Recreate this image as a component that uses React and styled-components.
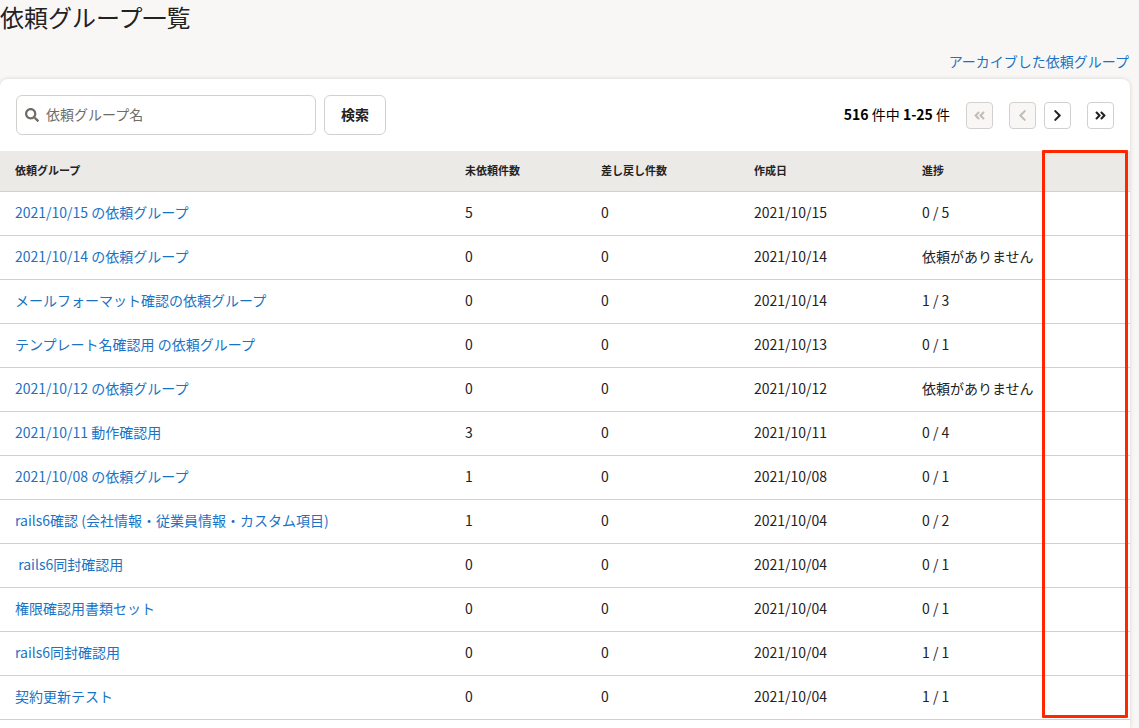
import React from 'react';
import styled, { createGlobalStyle, css } from 'styled-components';
import {
  FaAngleDoubleLeft,
  FaAngleDoubleRight,
  FaChevronLeft,
  FaChevronRight,
  FaSearch,
} from 'react-icons/fa';

const color = {
  text: '#23221f',
  link: '#1a73c4',
  muted: '#706d65',
  disabled: '#c1bdb7',
  border: '#d2d1ce',
  page: '#f8f7f6',
  head: '#ebeae7',
  mark: '#ff2600',
};

const GlobalStyle = createGlobalStyle`
  *, *::before, *::after { box-sizing: border-box; }
  body {
    margin: 0;
    background: ${color.page};
    color: ${color.text};
    font-family: "Noto Sans CJK JP", sans-serif;
    font-size: 14px;
    line-height: 20px;
  }
  button, input { font: inherit; color: inherit; }
`;

const Page = styled.main`
  display: flex;
  flex-direction: column;
  min-height: 100vh;
  padding-right: 9px;
`;

const Title = styled.h1`
  margin: 0;
  font-size: 24px;
  font-weight: 400;
  line-height: 34px;
`;

const Actions = styled.div`
  display: flex;
  justify-content: flex-end;
  padding: 17px 1px 8px 0;
`;

const TextLink = styled.a`
  color: ${color.link};
  text-decoration: none;
  &:hover { text-decoration: underline; }
`;

const Card = styled.section`
  flex: 1;
  background: #fff;
  border-radius: 8px 8px 0 0;
  box-shadow: 0 0 4px rgba(3, 3, 2, 0.15);
`;

const Toolbar = styled.div`
  display: flex;
  align-items: center;
  justify-content: space-between;
  padding: 16px;
`;

const SearchForm = styled.form`
  display: flex;
  gap: 8px;
`;

const SearchField = styled.label`
  display: flex;
  align-items: center;
  gap: 7px;
  width: 300px;
  height: 40px;
  padding: 0 8px;
  border: 1px solid ${color.border};
  border-radius: 6px;
  background: #fff;
  color: ${color.muted};
  svg { flex: none; }
`;

const SearchInput = styled.input`
  flex: 1;
  min-width: 0;
  padding: 0 0 2px;
  border: 0;
  outline: 0;
  background: transparent;
  color: ${color.text};
  &::placeholder { color: ${color.muted}; opacity: 1; }
`;

const SearchButton = styled.button`
  height: 40px;
  padding: 0 16px 2px;
  border: 1px solid ${color.border};
  border-radius: 6px;
  background: #fff;
  font-weight: 700;
`;

const Pagination = styled.nav`
  display: flex;
  align-items: center;
  gap: 16px;
`;

const Count = styled.p`
  margin: 0;
  padding-bottom: 2px;
  color: #000;
`;

const StepButtons = styled.div`
  display: flex;
  gap: 8px;
`;

const PageButton = styled.button`
  display: flex;
  align-items: center;
  justify-content: center;
  width: 27px;
  height: 27px;
  padding: 0;
  border: 1px solid ${color.border};
  border-radius: 4px;
  background: #fff;
  ${(p) =>
    p.disabled &&
    css`
      background: ${color.page};
      color: ${color.disabled};
    `}
`;

const TableArea = styled.div`
  position: relative;
`;

const Table = styled.table`
  width: 100%;
  table-layout: fixed;
  border-collapse: separate;
  border-spacing: 0;
`;

const Column = styled.col`
  width: ${(p) => (p.$width ? `${p.$width}px` : 'auto')};
`;

const HeadCell = styled.th`
  height: 41px;
  padding: 0 15px 2px;
  border-bottom: 1px solid ${color.border};
  background: ${color.head};
  font-size: 11px;
  font-weight: 700;
  text-align: left;
`;

const Cell = styled.td`
  height: 44px;
  padding: 0 0 4px 15px;
  border-bottom: 1px solid ${color.border};
  white-space: nowrap;
`;

const Highlight = styled.div`
  position: absolute;
  top: -1px;
  right: 2px;
  bottom: 2px;
  width: 86px;
  border: 3px solid ${color.mark};
  border-radius: 1px;
  pointer-events: none;
`;

const columns = [
  { label: '依頼グループ' },
  { label: '未依頼件数', width: 136 },
  { label: '差し戻し件数', width: 153 },
  { label: '作成日', width: 168 },
  { label: '進捗', width: 143 },
  { label: '', width: 80 },
];

const rows = [
  ['2021/10/15 の依頼グループ', 5, 0, '2021/10/15', '0 / 5'],
  ['2021/10/14 の依頼グループ', 0, 0, '2021/10/14', '依頼がありません'],
  ['メールフォーマット確認の依頼グループ', 0, 0, '2021/10/14', '1 / 3'],
  ['テンプレート名確認用 の依頼グループ', 0, 0, '2021/10/13', '0 / 1'],
  ['2021/10/12 の依頼グループ', 0, 0, '2021/10/12', '依頼がありません'],
  ['2021/10/11 動作確認用', 3, 0, '2021/10/11', '0 / 4'],
  ['2021/10/08 の依頼グループ', 1, 0, '2021/10/08', '0 / 1'],
  ['rails6確認 (会社情報・従業員情報・カスタム項目)', 1, 0, '2021/10/04', '0 / 2'],
  ['\u00a0rails6同封確認用', 0, 0, '2021/10/04', '0 / 1'],
  ['権限確認用書類セット', 0, 0, '2021/10/04', '0 / 1'],
  ['rails6同封確認用', 0, 0, '2021/10/04', '1 / 1'],
  ['契約更新テスト', 0, 0, '2021/10/04', '1 / 1'],
];

export default function App() {
  return (
    <>
      <GlobalStyle />
      <Page lang="ja">
        <Title>依頼グループ一覧</Title>
        <Actions>
          <TextLink href="#archive">アーカイブした依頼グループ</TextLink>
        </Actions>
        <Card>
          <Toolbar>
            <SearchForm role="search" onSubmit={(e) => e.preventDefault()}>
              <SearchField htmlFor="group-name">
                <FaSearch size={14} aria-hidden="true" />
                <SearchInput
                  id="group-name"
                  type="text"
                  aria-label="依頼グループ名"
                  placeholder="依頼グループ名"
                />
              </SearchField>
              <SearchButton type="submit">検索</SearchButton>
            </SearchForm>
            <Pagination aria-label="ページ送り">
              <Count>
                <b>516</b> 件中 <b>1-25</b> 件
              </Count>
              <PageButton type="button" aria-label="最初へ" disabled>
                <FaAngleDoubleLeft size={13} />
              </PageButton>
              <StepButtons>
                <PageButton type="button" aria-label="前へ" disabled>
                  <FaChevronLeft size={13} />
                </PageButton>
                <PageButton type="button" aria-label="次へ">
                  <FaChevronRight size={13} />
                </PageButton>
              </StepButtons>
              <PageButton type="button" aria-label="最後へ">
                <FaAngleDoubleRight size={13} />
              </PageButton>
            </Pagination>
          </Toolbar>
          <TableArea>
            <Table>
              <colgroup>
                {columns.map((c) => (
                  <Column key={c.label} $width={c.width} />
                ))}
              </colgroup>
              <thead>
                <tr>
                  {columns.map((c) => (
                    <HeadCell key={c.label} scope="col">
                      {c.label}
                    </HeadCell>
                  ))}
                </tr>
              </thead>
              <tbody>
                {rows.map(([name, pending, returned, date, progress], i) => (
                  <tr key={name}>
                    <Cell>
                      <TextLink href={`#group-${i + 1}`}>{name}</TextLink>
                    </Cell>
                    <Cell>{pending}</Cell>
                    <Cell>{returned}</Cell>
                    <Cell>{date}</Cell>
                    <Cell>{progress}</Cell>
                    <Cell />
                  </tr>
                ))}
              </tbody>
            </Table>
            <Highlight />
          </TableArea>
        </Card>
      </Page>
    </>
  );
}
